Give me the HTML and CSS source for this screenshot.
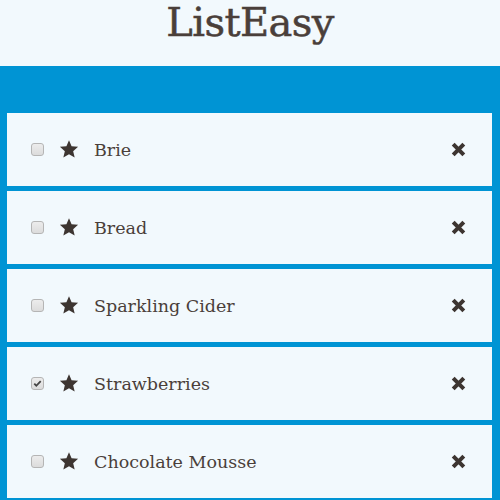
FILE: index.html
```html
<!DOCTYPE html>
<html>
<head>
<meta charset="utf-8">
<link rel="stylesheet" href="styles.css">
</head>
<body>
<header class="top"><h1 class="title">ListEasy</h1></header>
<main class="board">
  <ul class="list">
    <li class="item"><span class="box"></span><svg class="star" viewBox="0 0 24 24"><path d="M12 1.5l3.1 7.2 7.8.7-5.9 5.2 1.8 7.7L12 18.3l-6.8 4 1.8-7.7-5.9-5.2 7.8-.7z"/></svg><span class="name">Brie</span><svg class="del" viewBox="0 0 16 16"><path d="M3 3l10 10M13 3L3 13"/></svg></li>
    <li class="item"><span class="box"></span><svg class="star" viewBox="0 0 24 24"><path d="M12 1.5l3.1 7.2 7.8.7-5.9 5.2 1.8 7.7L12 18.3l-6.8 4 1.8-7.7-5.9-5.2 7.8-.7z"/></svg><span class="name">Bread</span><svg class="del" viewBox="0 0 16 16"><path d="M3 3l10 10M13 3L3 13"/></svg></li>
    <li class="item"><span class="box"></span><svg class="star" viewBox="0 0 24 24"><path d="M12 1.5l3.1 7.2 7.8.7-5.9 5.2 1.8 7.7L12 18.3l-6.8 4 1.8-7.7-5.9-5.2 7.8-.7z"/></svg><span class="name">Sparkling Cider</span><svg class="del" viewBox="0 0 16 16"><path d="M3 3l10 10M13 3L3 13"/></svg></li>
    <li class="item"><span class="box checked"><svg viewBox="0 0 12 12"><path d="M2.5 6.2l2.2 2.3 4.8-5"/></svg></span><svg class="star" viewBox="0 0 24 24"><path d="M12 1.5l3.1 7.2 7.8.7-5.9 5.2 1.8 7.7L12 18.3l-6.8 4 1.8-7.7-5.9-5.2 7.8-.7z"/></svg><span class="name">Strawberries</span><svg class="del" viewBox="0 0 16 16"><path d="M3 3l10 10M13 3L3 13"/></svg></li>
    <li class="item"><span class="box"></span><svg class="star" viewBox="0 0 24 24"><path d="M12 1.5l3.1 7.2 7.8.7-5.9 5.2 1.8 7.7L12 18.3l-6.8 4 1.8-7.7-5.9-5.2 7.8-.7z"/></svg><span class="name">Chocolate Mousse</span><svg class="del" viewBox="0 0 16 16"><path d="M3 3l10 10M13 3L3 13"/></svg></li>
  </ul>
</main>
</body>
</html>
```
FILE: styles.css
```css
* { box-sizing: border-box; }
html, body { margin: 0; padding: 0; }
body {
  width: 500px;
  height: 500px;
  overflow: hidden;
  background: #0094d4;
  font-family: "DejaVu Serif", serif;
  color: #4a3f3a;
}
.top {
  height: 66px;
  background: #f2f9fd;
  display: flex;
  justify-content: center;
  align-items: flex-start;
}
.title {
  margin: 0;
  font-size: 40px;
  font-weight: normal;
  line-height: 44px;
  letter-spacing: -0.6px;
  -webkit-text-stroke: 0.5px #4a3f3a;
}
.board {
  padding: 47px 8px 0 7px;
}
.list {
  list-style: none;
  margin: 0;
  padding: 0;
  display: flex;
  flex-direction: column;
  gap: 5px;
}
.item {
  height: 73px;
  background: #f2f9fd;
  display: flex;
  align-items: center;
  padding: 0 25px 0 24px;
}
.box {
  width: 13px;
  height: 13px;
  border: 1px solid #b5b5b5;
  border-radius: 3px;
  background: linear-gradient(#ececec, #dcdcdc);
  display: flex;
  align-items: center;
  justify-content: center;
  flex: none;
}
.box svg {
  width: 11px;
  height: 11px;
  fill: none;
  stroke: #444;
  stroke-width: 2;
}
.star {
  width: 20px;
  height: 20px;
  fill: #3d3531;
  margin-left: 15px;
  margin-top: -2px;
  flex: none;
}
.name {
  margin-left: 15px;
  font-size: 17.5px;
  flex: 1;
}
.del {
  width: 17px;
  height: 17px;
  fill: none;
  stroke: #3d3531;
  stroke-width: 3.8;
  flex: none;
}
```
